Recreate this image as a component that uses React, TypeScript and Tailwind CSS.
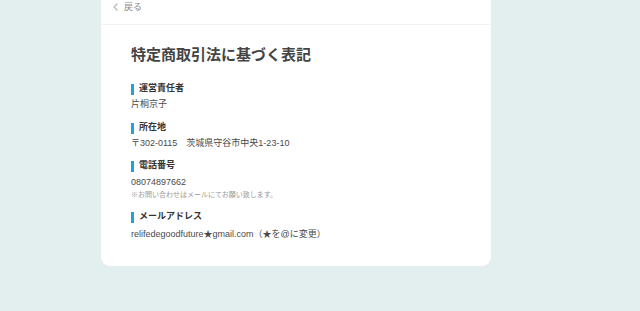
import React from "react";

const font = { fontFamily: '"Liberation Sans", "Noto Sans CJK JP", sans-serif' };

function Label({ children }: { children: React.ReactNode }) {
  return (
    <div className="flex items-center h-[14px] gap-[5px]">
      <span className="w-[3px] h-[11px] bg-[#1fa3d8]" />
      <span className="text-[9px] font-bold text-[#333]">{children}</span>
    </div>
  );
}

export default function App() {
  return (
    <div className="w-[640px] h-[311px] bg-[#e3eeee] overflow-hidden" style={font}>
      <div className="ml-[101px] w-[390px] bg-white rounded-b-[9px]">
        <div className="-mt-[10px] h-[35px] box-border border-b border-[#eef2f3] pl-[11px] pt-[10px] flex items-start gap-[4px]">
          <div className="h-[14px] flex items-center">
            <svg width="8" height="10" viewBox="0 0 8 10">
              <path d="M5.5 1.5 L2 5 L5.5 8.5" fill="none" stroke="#bbb" strokeWidth="1.3" />
            </svg>
          </div>
          <span className="text-[9px] text-[#888] leading-[14px]">戻る</span>
        </div>
        <div className="pl-[30px] pt-[19px] pb-[25px]">
          <h1 className="text-[15px] leading-[22px] font-bold text-[#444] mb-[16px]">特定商取引法に基づく表記</h1>
          <Label>運営責任者</Label>
          <div className="text-[9px] leading-[14px] text-[#4a4a4a] mt-[1px] mb-[10px]">片桐京子</div>
          <Label>所在地</Label>
          <div className="text-[9px] leading-[14px] text-[#4a4a4a] mt-[1px] mb-[9px]">〒302-0115　茨城県守谷市中央1-23-10</div>
          <Label>電話番号</Label>
          <div className="text-[9px] leading-[14px] text-[#4a4a4a] mt-[2px]">08074897662</div>
          <div className="text-[7px] leading-[12px] text-[#999] mb-[9px]">※お問い合わせはメールにてお願い致します。</div>
          <Label>メールアドレス</Label>
          <div className="text-[9px] leading-[14px] text-[#4a4a4a] mt-[3px]">relifedegoodfuture★gmail.com（★を@に変更）</div>
        </div>
      </div>
    </div>
  );
}
